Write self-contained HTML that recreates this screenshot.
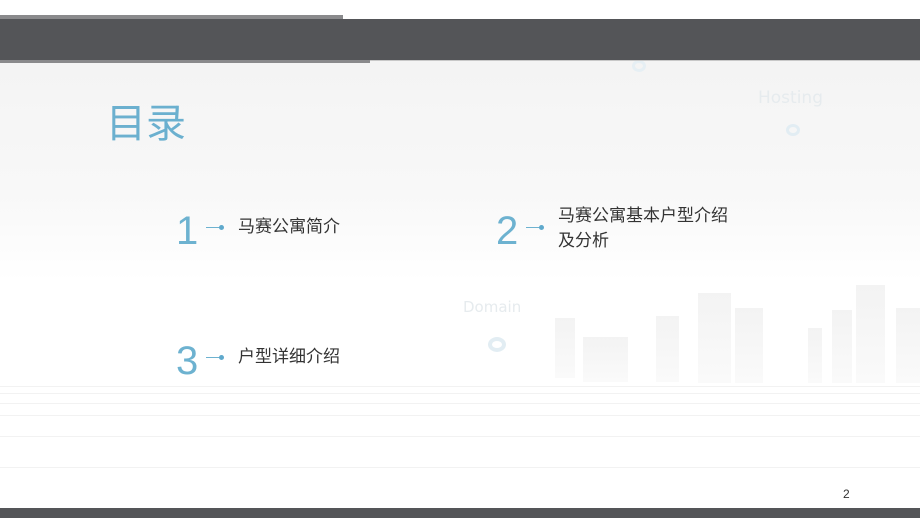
<!DOCTYPE html>
<html><head><meta charset="utf-8"><style>
html,body{margin:0;padding:0}
body{width:920px;height:518px;position:relative;overflow:hidden;background:#fff;font-family:"Liberation Sans","Noto Sans CJK SC",sans-serif}
.a{position:absolute}
.num{position:absolute;font-size:40px;color:#6db2d0;line-height:40px;font-family:"Liberation Sans",sans-serif}
.ln{position:absolute;height:1px;width:16px;background:#6db2d0}
.dot{position:absolute;width:5px;height:5px;border-radius:50%;background:#5fa9cc}
.t{position:absolute;font-size:17px;color:#333;line-height:25px;white-space:nowrap}
.b{position:absolute;background:linear-gradient(#f3f3f3,#fafafa)}
.h{position:absolute;left:0;width:920px;height:1px;background:#f2f2f2}
</style></head><body>
<div class="a" style="left:0;top:61px;width:920px;height:220px;background:linear-gradient(#f4f4f4,#f8f8f8 60%,#fff)"></div>
<div class="b" style="left:555px;top:318px;width:20px;height:60px"></div>
<div class="b" style="left:583px;top:337px;width:45px;height:45px"></div>
<div class="b" style="left:656px;top:316px;width:23px;height:66px"></div>
<div class="b" style="left:698px;top:293px;width:33px;height:90px"></div>
<div class="b" style="left:735px;top:308px;width:28px;height:75px"></div>
<div class="b" style="left:808px;top:328px;width:14px;height:55px"></div>
<div class="b" style="left:832px;top:310px;width:20px;height:73px"></div>
<div class="b" style="left:856px;top:285px;width:29px;height:98px"></div>
<div class="b" style="left:896px;top:308px;width:24px;height:75px"></div>
<div class="a" style="left:758px;top:88px;font-size:17px;color:#e6ebee;font-family:'DejaVu Sans',sans-serif">Hosting</div>
<div class="a" style="left:463px;top:298px;font-size:15px;color:#e6ebee;font-family:'DejaVu Sans',sans-serif">Domain</div>
<div class="a" style="left:786px;top:124px;width:8px;height:6px;border:3px solid #e2edf3;border-radius:50%"></div>
<div class="a" style="left:488px;top:337px;width:10px;height:7px;border:4px solid #e2edf3;border-radius:50%"></div>
<div class="a" style="left:632px;top:60px;width:8px;height:6px;border:3px solid #e6eff4;border-radius:50%"></div>
<div class="h" style="top:386px"></div>
<div class="h" style="top:393px"></div>
<div class="h" style="top:403px"></div>
<div class="h" style="top:415px"></div>
<div class="h" style="top:436px"></div>
<div class="h" style="top:467px"></div>
<div class="a" style="left:0;top:15px;width:343px;height:5px;background:#8a8a8c"></div>
<div class="a" style="left:0;top:19px;width:920px;height:42px;background:#545558"></div>
<div class="a" style="left:0;top:60px;width:370px;height:3px;background:#8a8a8c"></div>
<div class="a" style="left:370px;top:60px;width:550px;height:1px;background:#c8c8c8"></div>
<div class="a" style="left:0;top:508px;width:920px;height:10px;background:#545558"></div>
<div class="a" style="left:843px;top:487px;font-size:12px;color:#333">2</div>
<div class="a" style="left:106px;top:100px;font-size:40px;color:#6bb0cf;line-height:48px">目录</div>
<div class="num" style="left:176px;top:211px">1</div>
<div class="ln" style="left:206px;top:227px"></div><div class="dot" style="left:219px;top:225px"></div>
<div class="t" style="left:238px;top:214px">马赛公寓简介</div>
<div class="num" style="left:496px;top:211px">2</div>
<div class="ln" style="left:526px;top:227px"></div><div class="dot" style="left:539px;top:225px"></div>
<div class="t" style="left:558px;top:203px">马赛公寓基本户型介绍<br>及分析</div>
<div class="num" style="left:176px;top:341px">3</div>
<div class="ln" style="left:206px;top:357px"></div><div class="dot" style="left:219px;top:355px"></div>
<div class="t" style="left:238px;top:344px">户型详细介绍</div>
</body></html>
